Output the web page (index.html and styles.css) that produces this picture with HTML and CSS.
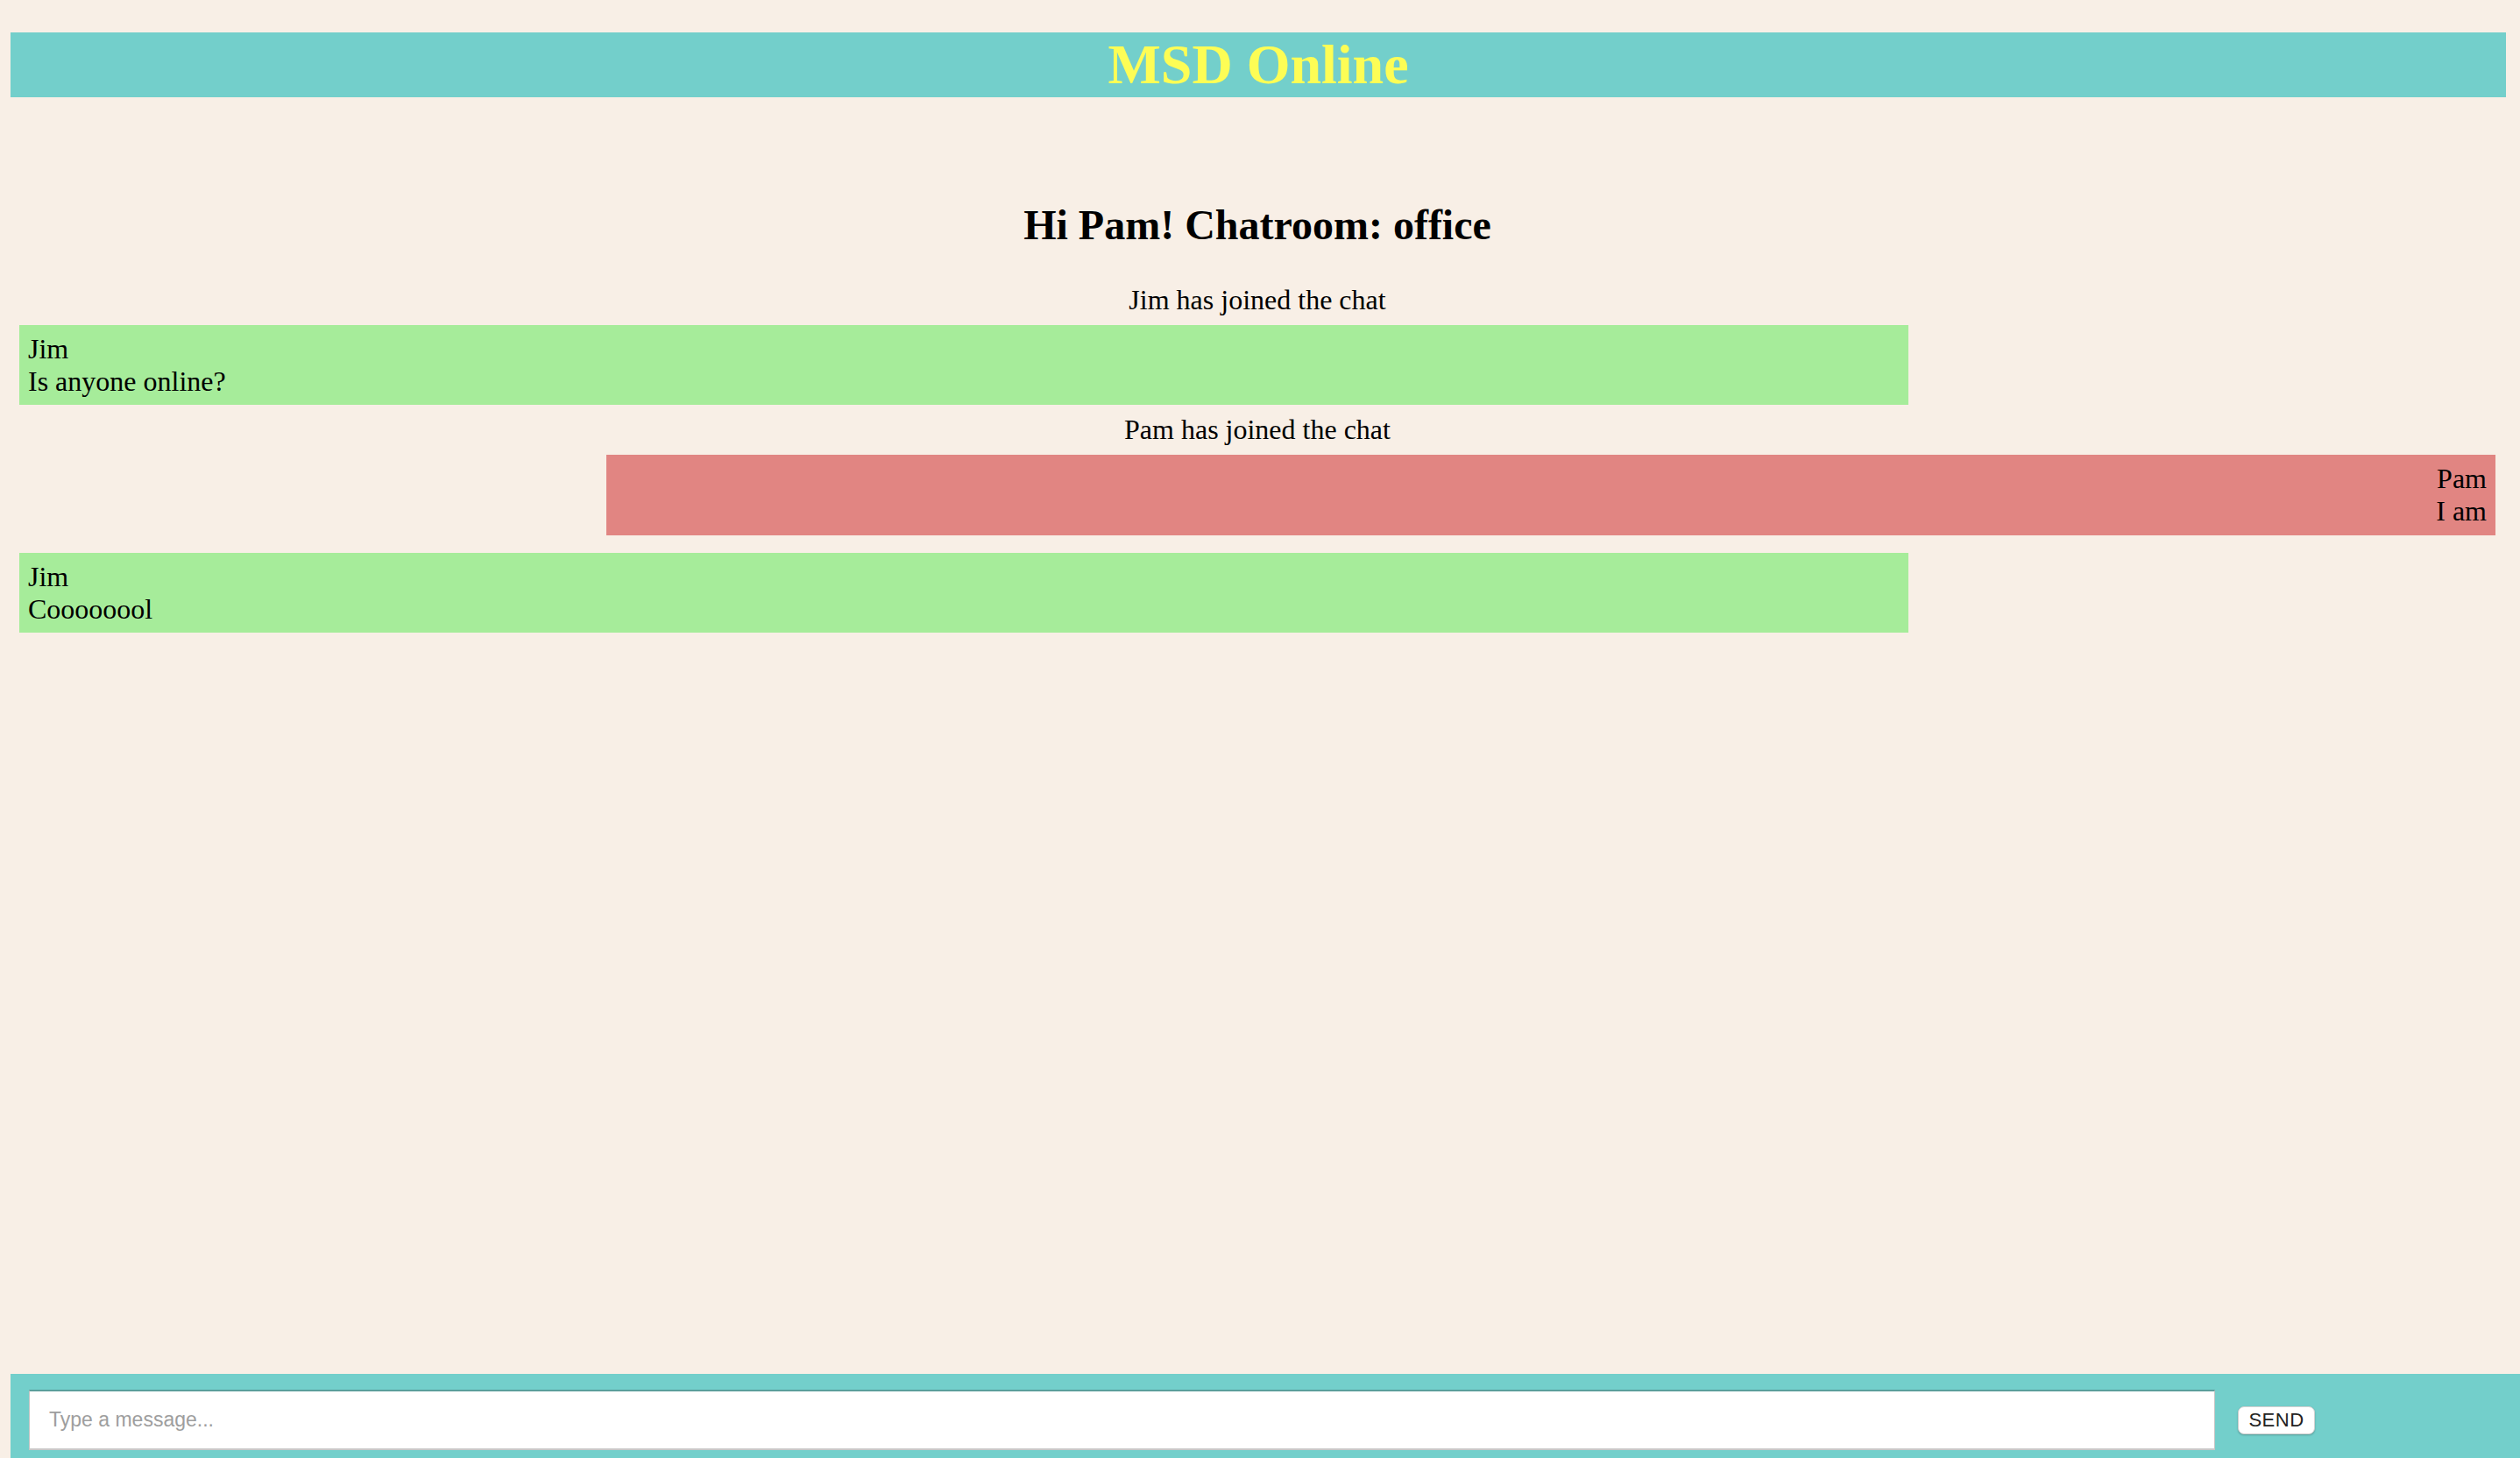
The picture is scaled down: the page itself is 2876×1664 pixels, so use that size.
FILE: index.html
```html
<!DOCTYPE html>
<html lang="en">
<head>
<meta charset="utf-8">
<title>MSD Online</title>
<link rel="stylesheet" href="styles.css">
</head>
<body>
<div class="page">
  <header class="topbar">
    <h1 class="brand">MSD Online</h1>
  </header>
  <main class="chat">
    <h2 class="room-title">Hi Pam! Chatroom: office</h2>
    <div class="messages">
      <div class="notice">Jim has joined the chat</div>
      <div class="bubble bubble-other">
        <div class="author">Jim</div>
        <div class="text">Is anyone online?</div>
      </div>
      <div class="notice">Pam has joined the chat</div>
      <div class="bubble bubble-self">
        <div class="author">Pam</div>
        <div class="text">I am</div>
      </div>
      <div class="bubble bubble-other">
        <div class="author">Jim</div>
        <div class="text">Coooooool</div>
      </div>
    </div>
  </main>
  <footer class="composer">
    <input class="composer-input" type="text" placeholder="Type a message...">
    <button class="send-btn" type="button">SEND</button>
  </footer>
</div>
</body>
</html>
```

FILE: styles.css
```css
html, body {
  margin: 0;
  padding: 0;
  height: 100%;
  overflow: hidden;
}

body {
  background: #f8efe6;
  font-family: "Liberation Serif", "Times New Roman", serif;
  font-size: 32px;
  color: #000;
}

.page {
  display: flex;
  flex-direction: column;
  height: calc(100vh + 18px);
}

.topbar {
  margin: 37px 16px 0 12px;
  background: #73cfcb;
}

.brand {
  margin: 0;
  font-size: 64px;
  font-weight: bold;
  line-height: 74px;
  color: #fdfd55;
  text-align: center;
}

.chat {
  flex: 1;
  margin: 0 16px 0 12px;
  padding: 0 12px 0 10px;
}

.room-title {
  margin: 118px 0 40px 0;
  font-size: 48px;
  font-weight: bold;
  line-height: 55px;
  text-align: center;
}

.messages {
  display: flex;
  flex-direction: column;
}

.notice {
  text-align: center;
  line-height: 36.8px;
}

.bubble {
  width: 76.3%;
  box-sizing: border-box;
  margin: 10px 0;
  padding: 9px 10px 9px 10px;
  line-height: 36.8px;
}

.bubble-other {
  align-self: flex-start;
  background: #a6ec9a;
  text-align: left;
}

.bubble-self {
  align-self: flex-end;
  background: #e18582;
  text-align: right;
}

.composer {
  display: flex;
  align-items: flex-start;
  height: 114px;
  flex-shrink: 0;
  box-sizing: border-box;
  margin-left: 12px;
  padding: 18px 0 27px 21px;
  background: #73cfcb;
}

.composer-input {
  width: 2495px;
  height: 69px;
  box-sizing: border-box;
  margin: 0;
  padding: 0 22px;
  background: #fff;
  border: 1px solid #c4c4c4;
  border-top: 2px solid #5a9f9c;
  border-bottom: 2px solid #c8c8c8;
  font-family: "Liberation Sans", Arial, sans-serif;
  font-size: 23px;
  color: #222;
  outline: none;
}

.composer-input::placeholder {
  color: #9e9e9e;
}

.send-btn {
  margin: 19px 0 0 26px;
  width: 88px;
  height: 32px;
  box-sizing: border-box;
  padding: 0;
  background: #fff;
  border: 1px solid #d0d0d0;
  border-radius: 7px;
  box-shadow: 0 1px 2px rgba(0, 0, 0, 0.25);
  font-family: "Liberation Sans", Arial, sans-serif;
  font-size: 22px;
  color: #222;
  letter-spacing: 0.5px;
}
```
